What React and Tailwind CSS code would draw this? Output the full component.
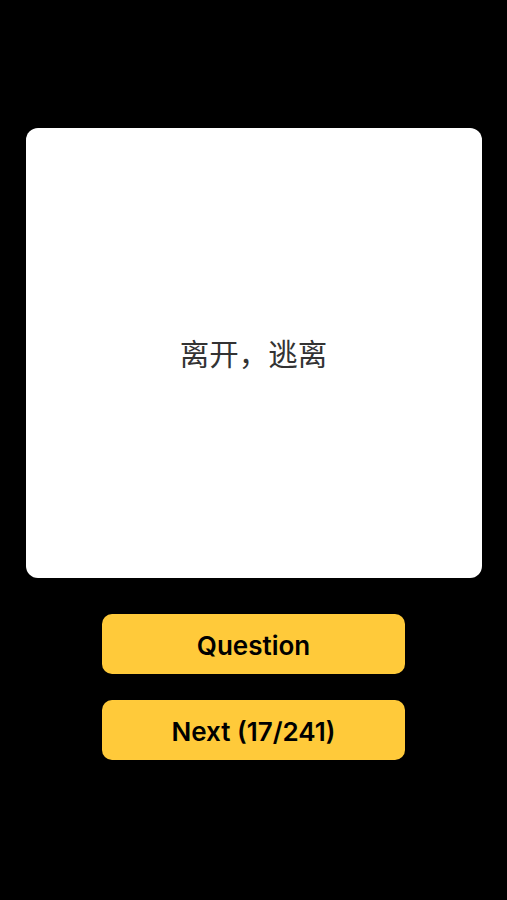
export default function App() {
  return (
    <div className="min-h-[900px] w-full bg-black flex flex-col items-center pt-[128px] font-['Inter','Noto_Sans_CJK_SC',sans-serif]">
      <div className="w-[456px] h-[450px] rounded-[12px] bg-white flex items-center justify-center">
        <p className="text-[29.5px] leading-none text-[#333333] font-['Noto_Sans_CJK_SC',sans-serif]">离开，逃离</p>
      </div>
      <div className="mt-[36px] flex flex-col gap-[26px]">
        <button className="w-[303px] h-[60px] pt-[3px] rounded-[10px] bg-[#ffca3a] text-[26px] font-semibold text-black">
          Question
        </button>
        <button className="w-[303px] h-[60px] pt-[3px] rounded-[10px] bg-[#ffca3a] text-[26px] font-semibold text-black">
          Next (17/241)
        </button>
      </div>
    </div>
  );
}
